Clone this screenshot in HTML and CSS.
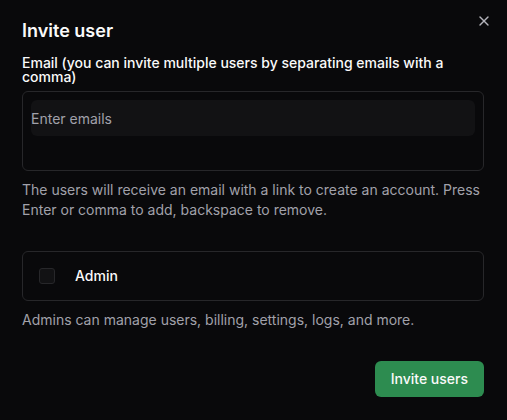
FILE: index.html
```html
<!DOCTYPE html>
<html lang="en">
<head>
    <meta charset="UTF-8">
    <meta name="viewport" content="width=device-width, initial-scale=1.0">
    <title>Invite user</title>
    <link rel="stylesheet" href="styles.css">
</head>
<body>
    <div class="dialog" role="dialog" aria-labelledby="dialog-title">
        <h2 class="dialog-title" id="dialog-title">Invite user</h2>

        <form class="invite-form">
            <div class="field">
                <label class="field-label" for="emails">Email (you can invite multiple users by separating emails with a comma)</label>
                <div class="email-box">
                    <input type="text" class="email-input" id="emails" placeholder="Enter emails">
                </div>
                <p class="field-hint">The users will receive an email with a link to create an account. Press Enter or comma to add, backspace to remove.</p>
            </div>

            <div class="field">
                <div class="option">
                    <input type="checkbox" class="checkbox" id="admin">
                    <label class="field-label" for="admin">Admin</label>
                </div>
                <p class="field-hint">Admins can manage users, billing, settings, logs, and more.</p>
            </div>

            <div class="dialog-footer">
                <button type="submit" class="submit-button">Invite users</button>
            </div>
        </form>

        <button type="button" class="close-button" aria-label="Close">
            <svg width="16" height="16" viewBox="0 0 24 24" fill="none" stroke="currentColor" stroke-width="2" stroke-linecap="round" stroke-linejoin="round">
                <path d="M18 6 6 18"/>
                <path d="m6 6 12 12"/>
            </svg>
        </button>
    </div>
</body>
</html>
```
FILE: styles.css
```css
* {
    box-sizing: border-box;
}

body {
    margin: 0;
    background-color: #09090b;
    color: #fafafa;
    font-family: 'Inter', sans-serif;
    font-size: 14px;
    line-height: 20px;
}

.dialog {
    position: relative;
    padding: 22px 23px 23px 22px;
}

.dialog-title {
    margin: 0 0 16px;
    font-size: 18px;
    font-weight: 600;
    line-height: 18px;
}

/* Form */
.invite-form {
    display: flex;
    flex-direction: column;
    gap: 31px;
}

.field {
    display: flex;
    flex-direction: column;
    gap: 7px;
}

.field-label {
    font-weight: 500;
    line-height: 14px;
}

.email-box {
    min-height: 80px;
    padding: 8px;
    border: 1px solid #27272a;
    border-radius: 6px;
}

.email-input {
    display: block;
    width: 100%;
    height: 36px;
    padding: 0;
    border: none;
    border-radius: 6px;
    outline: none;
    background-color: #121214;
    color: #fafafa;
    font: inherit;
}

.email-input::placeholder {
    color: #a1a1aa;
}

.field-hint {
    margin: 2px 0 0;
    color: #a1a1aa;
}

.option {
    display: flex;
    align-items: center;
    gap: 20px;
    padding: 16px;
    border: 1px solid #27272a;
    border-radius: 6px;
}

.checkbox {
    appearance: none;
    width: 16px;
    height: 16px;
    margin: 0;
    border: 1px solid #27272a;
    border-radius: 3px;
    background-color: #121214;
}

.checkbox:checked {
    background-color: #2d8c50;
}

/* Buttons */
.dialog-footer {
    display: flex;
    justify-content: flex-end;
}

.submit-button {
    height: 36px;
    padding: 0 16px;
    border: none;
    border-radius: 6px;
    background-color: #2d8c50;
    color: #fafafa;
    font: inherit;
    font-weight: 500;
    cursor: pointer;
}

.close-button {
    position: absolute;
    top: 13px;
    right: 15px;
    display: flex;
    padding: 0;
    border: none;
    background: none;
    color: #b4b4bb;
    cursor: pointer;
}
```
